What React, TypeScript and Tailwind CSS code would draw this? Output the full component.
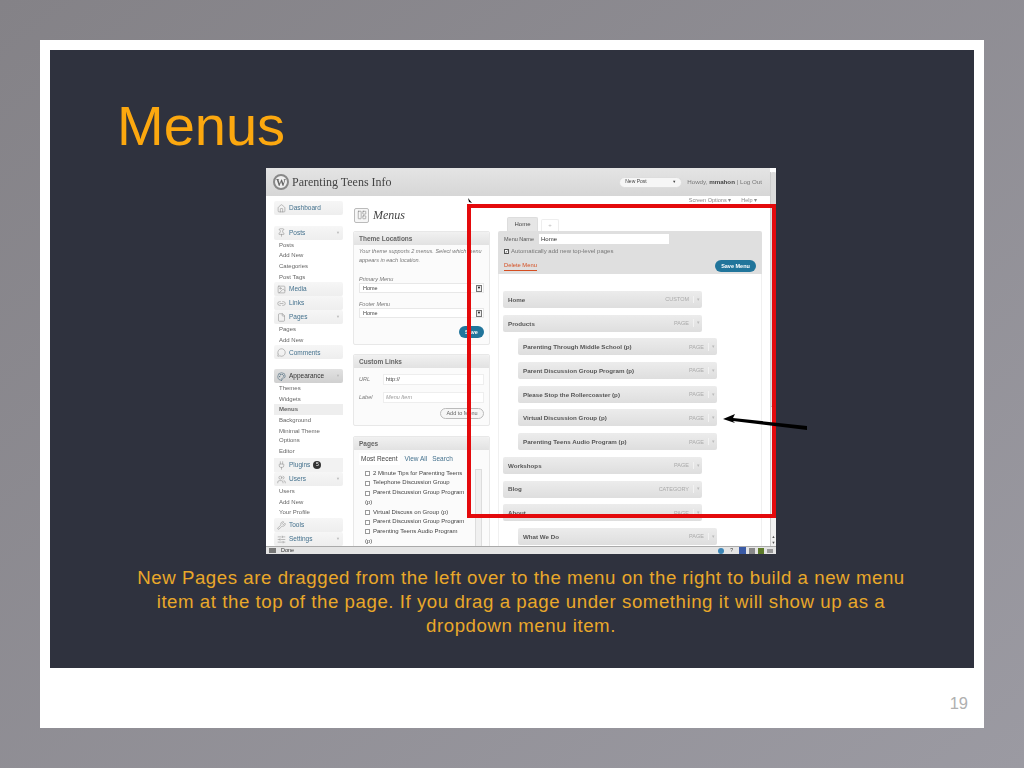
import React from 'react';
import { Home, Pin, Image, Link2, File, MessageCircle, Palette, Plug, Users, Wrench, SlidersHorizontal, LayoutPanelLeft } from 'lucide-react';

const subLink = 'h-[10.6px] leading-[10.6px] pl-[5px] text-[6px] text-[#666]';

const SideHead = ({ label, icon: Icon, arrow, active }: { label: string; icon: React.ElementType; arrow?: boolean; active?: boolean }) => (
  <div className={`flex h-[14.3px] items-center gap-[3px] px-[3px] bg-gradient-to-b ${active ? 'from-[#e2e2e2] to-[#d0d0d0]' : 'from-[#f6f6f6] to-[#eeeeee]'} rounded-[2px]`}>
    <Icon size={9} strokeWidth={1.4} className={active ? 'text-[#3f5f75]' : 'text-[#888]'} />
    <span className={`text-[6.5px] ${active ? 'text-[#333]' : 'text-[#44718d]'}`}>{label}</span>
    {arrow && <span className="ml-auto text-[4px] text-[#bbb]">▼</span>}
  </div>
);

const Sidebar = () => (
  <div className="flex w-[69px] shrink-0 flex-col">
    <SideHead label="Dashboard" icon={Home} />
    <div className="h-[11px]" />
    <SideHead label="Posts" icon={Pin} arrow />
    <div className="bg-white">
      <div className={subLink}>Posts</div>
      <div className={subLink}>Add New</div>
      <div className={subLink}>Categories</div>
      <div className={subLink}>Post Tags</div>
    </div>
    <SideHead label="Media" icon={Image} />
    <SideHead label="Links" icon={Link2} />
    <SideHead label="Pages" icon={File} arrow />
    <div className="bg-white">
      <div className={subLink}>Pages</div>
      <div className={subLink}>Add New</div>
    </div>
    <SideHead label="Comments" icon={MessageCircle} />
    <div className="h-[10px]" />
    <SideHead label="Appearance" icon={Palette} arrow active />
    <div className="bg-white pb-[2px]">
      <div className={subLink}>Themes</div>
      <div className={subLink}>Widgets</div>
      <div className={`${subLink} bg-[#eeeeee] font-bold text-[#333]`}>Menus</div>
      <div className={subLink}>Background</div>
      <div className="mt-[1px] pl-[5px] pr-[15px] text-[6px] leading-[9px] text-[#666]">Minimal Theme Options</div>
      <div className={`${subLink} mt-[1px]`}>Editor</div>
    </div>
    <div className="flex h-[14.3px] items-center gap-[3px] bg-[#f2f2f2] px-[3px]">
      <Plug size={9} strokeWidth={1.4} className="text-[#888]" />
      <span className="text-[6.5px] text-[#44718d]">Plugins</span>
      <span className="flex h-[8px] w-[8px] items-center justify-center rounded-full bg-[#333] text-[5px] text-white">5</span>
    </div>
    <SideHead label="Users" icon={Users} arrow />
    <div className="bg-white">
      <div className={subLink}>Users</div>
      <div className={subLink}>Add New</div>
      <div className={subLink}>Your Profile</div>
    </div>
    <SideHead label="Tools" icon={Wrench} />
    <SideHead label="Settings" icon={SlidersHorizontal} arrow />
  </div>
);

const BoxHead = ({ children }: { children: React.ReactNode }) => (
  <div className="flex h-[13px] items-center rounded-t-[2px] bg-gradient-to-b from-[#f1f1f1] to-[#e2e2e2] px-[5px] text-[6.5px] font-bold text-[#666]">{children}</div>
);

const FakeSelect = ({ label }: { label: string }) => (
  <div className="flex h-[10px] items-center border border-[#e8e8e8] bg-white pl-[3px] pr-[1px] text-[5.5px] text-[#444]">
    {label}
    <span className="ml-auto flex h-[7px] w-[6px] items-center justify-center border border-[#777] bg-[#eee] text-[4px] text-black">▼</span>
  </div>
);

const CenterColumn = () => (
  <div className="flex w-[137px] shrink-0 flex-col">
    <div className="flex h-[22px] items-center gap-[4px] pl-[1px]">
      <span className="flex h-[15px] w-[15px] items-center justify-center rounded-[2px] border border-[#bbb] bg-[#f6f6f6]">
        <LayoutPanelLeft size={10} strokeWidth={1.3} className="text-[#777]" />
      </span>
      <span className="font-['Liberation_Serif',serif] text-[12px] italic text-[#444]">Menus</span>
    </div>
    <div className="mt-[5px] h-[114px] rounded-[2px] border border-[#e8e8e8] bg-[#fbfbfb]">
      <BoxHead>Theme Locations</BoxHead>
      <div className="px-[5px] pt-[2px]">
        <p className="text-[5.5px] italic leading-[9px] text-[#777]">Your theme supports 2 menus. Select which menu appears in each location.</p>
        <p className="mt-[10px] text-[5.5px] italic leading-[8px] text-[#777]">Primary Menu</p>
        <FakeSelect label="Home" />
        <p className="mt-[7px] text-[5.5px] italic leading-[8px] text-[#777]">Footer Menu</p>
        <FakeSelect label="Home" />
        <div className="mt-[8px] flex justify-end">
          <span className="flex h-[12px] w-[25px] items-center justify-center rounded-full bg-[#21759b] text-[5.5px] font-bold text-white">Save</span>
        </div>
      </div>
    </div>
    <div className="mt-[9px] h-[72px] rounded-[2px] border border-[#e8e8e8] bg-[#fbfbfb]">
      <BoxHead>Custom Links</BoxHead>
      <div className="flex items-center px-[5px] pt-[6px]">
        <span className="w-[24px] text-[5.5px] italic text-[#777]">URL</span>
        <span className="flex h-[11px] flex-1 items-center border border-[#eee] bg-white px-[2px] text-[5.5px] text-[#444]">http://</span>
      </div>
      <div className="flex items-center px-[5px] pt-[7px]">
        <span className="w-[24px] text-[5.5px] italic text-[#777]">Label</span>
        <span className="flex h-[11px] flex-1 items-center border border-[#eee] bg-white px-[2px] text-[5.5px] italic text-[#999]">Menu Item</span>
      </div>
      <div className="mt-[5px] flex justify-end pr-[5px]">
        <span className="flex h-[11px] w-[44px] items-center justify-center rounded-full border border-[#bbb] bg-[#f6f6f6] text-[5.5px] text-[#666]">Add to Menu</span>
      </div>
    </div>
    <div className="mt-[10px] rounded-[2px] border border-[#e8e8e8] bg-[#fbfbfb]">
      <BoxHead>Pages</BoxHead>
      <div className="flex gap-[5px] pl-[5px] pt-[3px] text-[6.5px] text-[#44718d]">
        <span className="bg-white px-[2px] py-[1px] text-[#444]">Most Recent</span>
        <span className="py-[1px]">View All</span>
        <span className="py-[1px]">Search</span>
      </div>
      <div className="flex pl-[11px] pt-[4px]">
        <div className="w-[106px] text-[6px] leading-[9.7px] text-[#444]">
          {['2 Minute Tips for Parenting Teens', 'Telephone Discussion Group', 'Parent Discussion Group Program', null, 'Virtual Discuss on Group (p)', 'Parent Discussion Group Program', 'Parenting Teens Audio Program', null].map((t, i) =>
            t ? (
              <div key={i} className="flex items-center gap-[3px] whitespace-nowrap">
                <span className="inline-block h-[5px] w-[5px] shrink-0 border border-[#999] bg-white" />
                {t}
              </div>
            ) : (
              <div key={i}>(p)</div>
            )
          )}
        </div>
        <div className="ml-[4px] h-[80px] w-[7px] border border-[#ddd] bg-[#f0f0f0]" />
      </div>
    </div>
  </div>
);

const MenuRow = ({ label, kind, nested }: { label: string; kind: string; nested?: boolean }) => (
  <div className={`flex h-[17px] w-[199px] shrink-0 items-center rounded-[2px] bg-gradient-to-b from-[#ececec] to-[#dedede] pl-[5px] pr-[2px] text-[6.2px] font-bold text-[#555] ${nested ? 'ml-[15px]' : ''}`}>
    {label}
    <span className="ml-auto text-[5.5px] font-normal uppercase text-[#aaa]">{kind}</span>
    <span className="ml-[4px] border-l border-[#f2f2f2] pl-[3px] text-[5px] font-normal text-[#bbb]">▾</span>
  </div>
);

const MenuEditor = () => (
  <div className="flex w-[264px] shrink-0 flex-col">
    <div className="flex h-[8px] items-center justify-end gap-[10px] pr-[5px] text-[5.5px] text-[#888]">
      <span>Screen Options ▾</span>
      <span>Help ▾</span>
    </div>
    <div className="flex h-[27px] items-end gap-[3px] pl-[9px]">
      <span className="flex h-[14px] w-[31px] items-center justify-center rounded-t-[2px] border border-b-0 border-[#ddd] bg-[#e6e6e6] text-[6px] text-[#444]">Home</span>
      <span className="flex h-[12px] w-[18px] items-center justify-center rounded-t-[2px] border border-b-0 border-[#eee] text-[6px] text-[#bbb]">+</span>
    </div>
    <div className="flex h-[43px] shrink-0 flex-col rounded-t-[2px] bg-[#dfdfdf] px-[6px] pt-[3px]">
      <div className="flex items-center gap-[5px]">
        <span className="text-[5.5px] text-[#555]">Menu Name</span>
        <span className="flex h-[10px] w-[130px] items-center bg-white px-[2px] text-[6px] text-[#333]">Home</span>
      </div>
      <div className="mt-[3px] flex items-center gap-[2px] text-[6px] text-[#777]">
        <span className="flex h-[5px] w-[5px] items-center justify-center border border-[#555] bg-white text-[4px] leading-none text-black">✓</span>
        Automatically add new top-level pages
      </div>
      <div className="mt-auto mb-[2px] flex items-center justify-between">
        <span className="border-b border-[#d54e21] text-[5.8px] text-[#d54e21]">Delete Menu</span>
        <span className="flex h-[12px] w-[41px] items-center justify-center rounded-full bg-[#21759b] text-[5.5px] font-bold text-white">Save Menu</span>
      </div>
    </div>
    <div className="flex h-[272px] flex-col gap-[6.7px] overflow-hidden border-x border-[#f0f0f0] bg-white pl-[4px] pt-[17px]">
      <MenuRow label="Home" kind="Custom" />
      <MenuRow label="Products" kind="Page" />
      <MenuRow label="Parenting Through Middle School (p)" kind="Page" nested />
      <MenuRow label="Parent Discussion Group Program (p)" kind="Page" nested />
      <MenuRow label="Please Stop the Rollercoaster (p)" kind="Page" nested />
      <MenuRow label="Virtual Discussion Group (p)" kind="Page" nested />
      <MenuRow label="Parenting Teens Audio Program (p)" kind="Page" nested />
      <MenuRow label="Workshops" kind="Page" />
      <MenuRow label="Blog" kind="Category" />
      <MenuRow label="About" kind="Page" />
      <MenuRow label="What We Do" kind="Page" nested />
    </div>
  </div>
);

const Screenshot = () => (
  <div className="ml-[216px] flex h-[386px] w-[510px] flex-col overflow-hidden bg-white">
    <div className="flex min-h-0 flex-1">
      <div className="flex min-w-0 flex-1 flex-col">
        <div className="flex h-[28px] shrink-0 items-center bg-gradient-to-b from-[#e4e4e4] to-[#d6d6d6] pl-[7px] pr-[8px]">
          <span className="flex h-[16px] w-[16px] items-center justify-center rounded-full border-2 border-[#888] bg-[#eee] font-['Liberation_Serif',serif] text-[10px] font-bold text-[#666]">W</span>
          <span className="ml-[3px] font-['Liberation_Serif',serif] text-[12px] text-[#444]">Parenting Teens Info</span>
          <span className="ml-auto flex h-[11px] w-[63px] items-center justify-between rounded-full border border-[#ddd] bg-[#f6f6f6] px-[5px] text-[5px] text-[#444]">New Post<span className="text-[4px]">▼</span></span>
          <span className="ml-[5px] text-[6.2px] text-[#777]">Howdy, <b className="text-[#444]">mmahon</b> | Log Out</span>
        </div>
        <div className="flex min-h-0 flex-1 overflow-hidden pl-[8px] pt-[5px]">
          <Sidebar />
          <div className="ml-[10px] pt-[3px]"><CenterColumn /></div>
          <div className="ml-[8px] -mt-[5px]"><MenuEditor /></div>
        </div>
      </div>
      <div className="mt-[4px] flex w-[6px] shrink-0 flex-col justify-between border-l border-[#ccc] bg-[#f1f1f1]">
        <span className="h-[235px] rounded-t-[2px] border-b border-[#bbb] bg-[#dcdcdc]" />
        <span className="text-center text-[4px] leading-[6px] text-[#555]">▲<br />▼</span>
      </div>
    </div>
    <div className="flex h-[8px] shrink-0 items-center gap-[3px] border-t border-[#aaa] bg-[#e4e4e4] px-[3px] text-[5.5px] text-[#333]">
      <span className="h-[5px] w-[7px] bg-[#777]" />
      <span className="ml-[2px]">Done</span>
      <span className="ml-auto h-[6px] w-[6px] rounded-full bg-[#3d85b5]" />
      <span className="ml-[3px] text-[5px]">?</span>
      <span className="ml-[3px] h-[7px] w-[7px] bg-[#3a5aa5]" />
      <span className="h-[6px] w-[6px] bg-[#888]" />
      <span className="h-[6px] w-[6px] bg-[#5d7a2a]" />
      <span className="h-[4px] w-[6px] bg-[#999]" />
    </div>
  </div>
);

export default function App() {
  return (
    <div className="flex h-[768px] w-[1024px] items-start justify-center bg-gradient-to-br from-[#848287] to-[#9b9aa2] pt-[40px]">
      <div className="flex h-[688px] w-[944px] flex-col bg-white p-[10px] font-['Liberation_Sans',sans-serif]">
        <div className="relative h-[618px] shrink-0 bg-[#2f323e]">
          <h1 className="pl-[67px] pt-[38px] text-[56px] leading-[76px] font-normal text-[#fca80f]">Menus</h1>
          <div className="mt-[4px] blur-[0.5px]">
            <Screenshot />
          </div>
          <p className="ml-[76px] mt-[12px] w-[790px] text-center text-[18.67px] leading-[24px] tracking-[0.55px] text-[#e9a82a]">
            New Pages are dragged from the left over to the menu on the right to build a new menu item at the top of the page. If you drag a page under something it will show up as a dropdown menu item.
          </p>
          <div className="absolute left-[417px] top-[154px] h-[314px] w-[309px] border-[4px] border-[#e40a0c]" />
          <svg className="absolute left-[417px] top-[148px]" width="6" height="7" viewBox="0 0 6 7">
            <path d="M1 0 L5 5 L2 4 Z" fill="#000" />
          </svg>
          <svg className="absolute left-[670px] top-[362px]" width="90" height="20" viewBox="0 0 90 20">
            <path d="M3 7 L15 2 L13 6 L87 14 L87 18 L13 9 L15 11 Z" fill="#000" />
          </svg>
        </div>
        <div className="flex flex-1 items-center justify-end pr-[6px] pt-[20px] text-[16.5px] text-[#b0b0b0]">19</div>
      </div>
    </div>
  );
}
